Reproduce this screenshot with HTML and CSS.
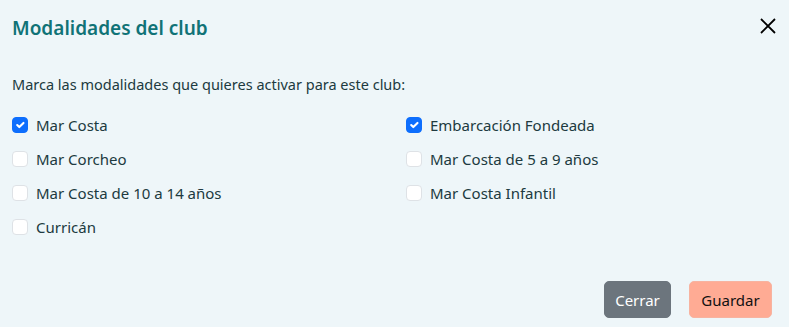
FILE: index.html
```html
<!DOCTYPE html>
<html lang="es">
<head>
<meta charset="utf-8">
<link rel="stylesheet" href="styles.css">
</head>
<body>
<div class="modal">
  <div class="modal-header">
    <h5 class="modal-title">Modalidades del club</h5>
    <button class="btn-close" aria-label="Cerrar">
      <svg width="16" height="16" viewBox="0 0 16 16"><path d="M1 1 L15 15 M15 1 L1 15" stroke="#000" stroke-width="1.8" fill="none"/></svg>
    </button>
  </div>
  <div class="modal-body">
    <p class="lead">Marca las modalidades que quieres activar para este club:</p>
    <div class="grid">
      <label class="check"><span class="box checked"><svg viewBox="0 0 20 20"><path d="M6 10l3 3l6-6" stroke="#fff" stroke-width="3" fill="none" stroke-linecap="round" stroke-linejoin="round"/></svg></span>Mar Costa</label>
      <label class="check"><span class="box checked"><svg viewBox="0 0 20 20"><path d="M6 10l3 3l6-6" stroke="#fff" stroke-width="3" fill="none" stroke-linecap="round" stroke-linejoin="round"/></svg></span>Embarcación Fondeada</label>
      <label class="check"><span class="box"></span>Mar Corcheo</label>
      <label class="check"><span class="box"></span>Mar Costa de 5 a 9 años</label>
      <label class="check"><span class="box"></span>Mar Costa de 10 a 14 años</label>
      <label class="check"><span class="box"></span>Mar Costa Infantil</label>
      <label class="check"><span class="box"></span>Curricán</label>
    </div>
  </div>
  <div class="modal-footer">
    <button class="btn btn-secondary">Cerrar</button>
    <button class="btn btn-save">Guardar</button>
  </div>
</div>
</body>
</html>
```
FILE: styles.css
```css
html, body {
  margin: 0;
  padding: 0;
  background: #eef6f9;
}
body {
  font-family: "Noto Sans", "Open Sans", sans-serif;
  color: #203a40;
  width: 789px;
  height: 327px;
  overflow: hidden;
}
.modal {
  display: flex;
  flex-direction: column;
  height: 327px;
}
.modal-header {
  display: flex;
  align-items: flex-start;
  justify-content: space-between;
  padding: 14px 12px 0 12px;
  height: 28px;
}
.modal-title {
  margin: 0;
  font-size: 19px;
  line-height: 28px;
  font-weight: 600;
  color: #107377;
}
.btn-close {
  border: 0;
  background: transparent;
  padding: 0;
  width: 16px;
  height: 16px;
  display: flex;
  margin-top: 4px;
  margin-right: 1px;
}
.modal-body {
  padding: 32px 12px 0 12px;
}
.lead {
  margin: 0 0 21px 0;
  font-size: 14.5px;
  line-height: 20px;
}
.grid {
  display: grid;
  grid-template-columns: 394px 1fr;
  row-gap: 14px;
}
.check {
  display: flex;
  align-items: center;
  font-size: 15px;
  line-height: 20px;
  height: 20px;
}
.box {
  box-sizing: border-box;
  width: 16px;
  height: 16px;
  border: 1px solid #dee2e6;
  border-radius: 4px;
  background: #fff;
  margin-right: 8px;
  display: inline-flex;
  align-items: center;
  justify-content: center;
  flex: none;
}
.box.checked {
  background: #0d6efd;
  border-color: #0d6efd;
}
.box svg {
  width: 16px;
  height: 16px;
}
.modal-footer {
  margin-top: auto;
  display: flex;
  justify-content: flex-end;
  gap: 18px;
  padding: 0 17px 9px 0;
}
.btn {
  font-family: inherit;
  font-size: 15px;
  height: 37px;
  padding: 0;
  border-radius: 5px;
  border: 1px solid transparent;
}
.btn-secondary {
  width: 67px;
  background: #6c757d;
  color: #fff;
  border-color: #6c757d;
}
.btn-save {
  width: 83px;
  background: #ffab94;
  border-color: #f7b3a0;
  color: #111;
}
```
